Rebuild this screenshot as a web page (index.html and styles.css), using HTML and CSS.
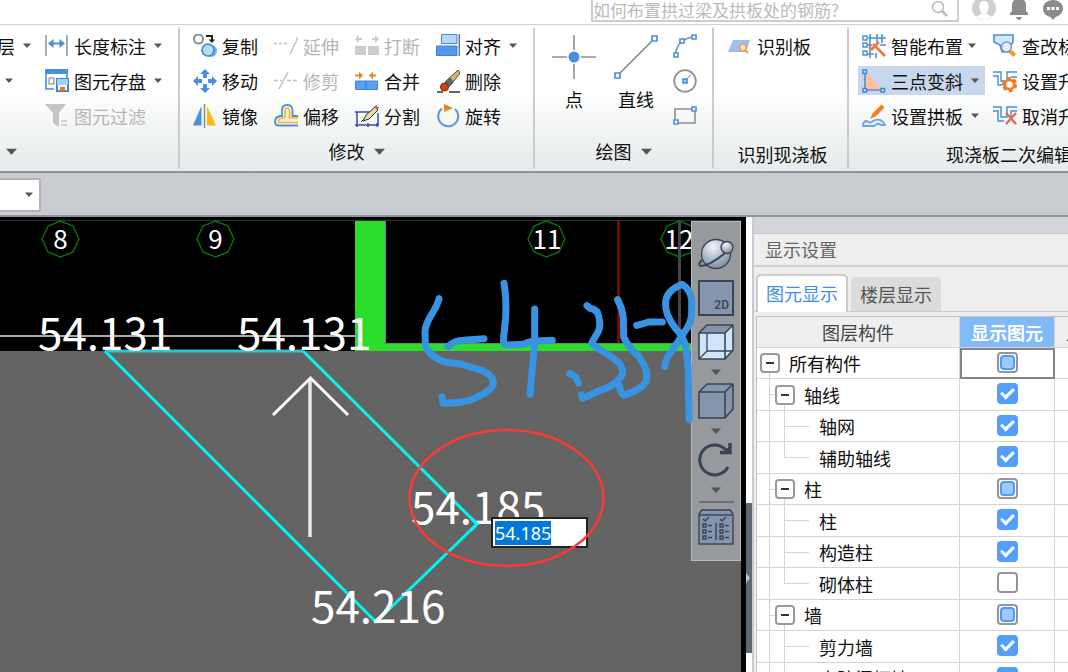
FILE: index.html
```html
<!DOCTYPE html>
<html lang="zh-CN">
<head>
<meta charset="utf-8">
<title>现浇板编辑</title>
<link rel="stylesheet" href="styles.css">
</head>
<body>
<svg class="defs" width="0" height="0" aria-hidden="true">
  <symbol id="caret" viewBox="0 0 10 6"><path d="M0 0.5H10L5 6Z" fill="#555"/></symbol>
  <symbol id="cube" viewBox="0 0 36 36"><path d="M1 9H27V35H1ZM1 9L9 1H35L27 9M35 1V26L27 35" stroke="#3b4452" stroke-width="1.6" stroke-linejoin="round"/></symbol>
</svg>

<header class="topbar">
  <form class="search" role="search">
    <input class="search-input" type="search" aria-label="搜索" placeholder="如何布置拱过梁及拱板处的钢筋?">
    <button class="search-button" type="button" aria-label="搜索"><svg width="17" height="17" viewBox="0 0 17 17" fill="none" stroke="#bbb"><circle cx="7" cy="7" r="5.5" stroke-width="1.5"/><path d="M11 11L16 16" stroke-width="2.5"/></svg></button>
  </form>
  <button class="top-icon" aria-label="用户"><svg width="24" height="24" viewBox="0 0 24 24"><circle cx="12" cy="12" r="12" fill="#d0d0d0"/><path d="M12 5C8 5 7 8 7.500 12C8 15 9 16 9.500 17C9 19 6 19 4 21Q12 27 20 21C18 19 15 19 14.500 17C15 16 16 15 16.500 12C17 8 16 5 12 5Z" fill="#fff"/></svg></button>
  <button class="top-icon" aria-label="通知"><svg width="20" height="24" viewBox="0 0 20 24" fill="#8b8b8b"><path d="M1 19V17L3 15V9Q3 3 10 2Q17 3 17 9V15L19 17V19ZM7 21H13Q12 24 10 24T7 21"/></svg></button>
  <button class="top-icon" aria-label="消息"><svg width="22" height="24" viewBox="0 0 22 24"><path d="M11 4C17 4 21 8 21 12.500C21 17 17 20 13.500 21L11 24L8.500 21C4 20 1 17 1 12.500C1 8 5 4 11 4Z" fill="#8b8b8b"/><path d="M5 11h3v3H5ZM9.500 11h3v3h-3ZM14 11h3v3h-3Z" fill="#fff"/></svg></button>
</header>

<nav class="ribbon" aria-label="工具">
  <section class="group group-common">
    <div class="tools">
      <button class="tool tool-cut">层<svg class="caret"><use href="#caret"/></svg></button>
      <button class="tool"><svg class="icon" viewBox="0 0 24 24" fill="none"><path d="M1 1V22M22 1V22" stroke="#8a929c" stroke-width="1.5"/><path d="M6 9.500H17" stroke="#4a8fde" stroke-width="2"/><path d="M3 9.500L8.500 5V14ZM20 9.500L14.500 5V14Z" fill="#4a8fde"/></svg>长度标注<svg class="caret"><use href="#caret"/></svg></button>
      <button class="tool tool-lone" aria-label="更多"><svg class="caret"><use href="#caret"/></svg></button>
      <button class="tool"><svg class="icon" viewBox="0 0 24 24" fill="none"><path d="M1 1H22V10M1 1V20H9" stroke="#4a8fde" stroke-width="1.6"/><path d="M0 0H23V5H0Z" fill="#4a8fde"/><path d="M4 9H9V15H4Z" stroke="#777"/><path d="M12 10H23V22H12Z" fill="#fff" stroke="#3a86dc" stroke-width="2"/><path d="M12 10H23V16H12Z" fill="#a9cdf7"/><path d="M15 18H20V22H15Z" fill="#f07020"/></svg>图元存盘<svg class="caret"><use href="#caret"/></svg></button>
      <span></span>
      <button class="tool" disabled><svg class="icon" viewBox="0 0 24 24"><path d="M0 0H21L14 9V23L8 19V9Z" fill="#c5c5c5"/><path d="M16 17H22M16 21H22" stroke="#c5c5c5" stroke-width="1.5"/></svg>图元过滤</button>
    </div>
    <button class="caption caption-left" aria-label="展开"><svg class="caret big"><use href="#caret"/></svg></button>
  </section>

  <section class="group group-modify">
    <div class="tools">
      <button class="tool"><svg class="icon" viewBox="0 0 24 24" fill="none"><circle cx="5.500" cy="5" r="4.500" stroke="#8b8f94" stroke-width="2"/><path d="M13 2H19V7" stroke="#222" stroke-width="2"/><path d="M15.500 5.500H22L19 9Z" fill="#222"/><circle cx="18" cy="17" r="6" fill="#6fb0ef"/><circle cx="15" cy="16" r="6" fill="#b5defa" stroke="#3b87d6" stroke-width="1.6"/></svg>复制</button>
      <button class="tool" disabled><svg class="icon" viewBox="0 0 24 24" fill="none" stroke="#c0c0c0" stroke-width="1.5"><path d="M0 9.500H15" stroke-dasharray="3 2"/><path d="M24 3L16 20"/></svg>延伸</button>
      <button class="tool" disabled><svg class="icon" viewBox="0 0 24 24" fill="#ccc"><path d="M0 12H11V21H0ZM13 12H24V21H13ZM0 5L4 1V9ZM24 5L20 1V9Z"/><path d="M3 5H7M17 5H21" stroke="#ccc" stroke-width="2"/></svg>打断</button>
      <button class="tool"><svg class="icon" viewBox="0 0 24 24"><path d="M5.500 0.500H21V9.500H5.500Z" fill="#b8d8fa" stroke="#3f8be0"/><path d="M0.500 12H21V21.500H0.500Z" fill="#5299ec" stroke="#3f82d4"/><path d="M23.300 0V22" stroke="#6b7280" stroke-width="1.4"/></svg>对齐<svg class="caret"><use href="#caret"/></svg></button>
      <button class="tool"><svg class="icon" viewBox="0 0 24 24"><path d="M12 0L17 5H14V9H10V5H7ZM12 24L7 19H10V15H14V19H17ZM0 12L5 7V10H9V14H5V17ZM24 12L19 17V14H15V10H19V7Z" fill="#4a8fde"/></svg>移动</button>
      <button class="tool" disabled><svg class="icon" viewBox="0 0 24 24" fill="none" stroke="#c0c0c0" stroke-width="1.5"><path d="M0 11.500H8M13 11.500H24" stroke-dasharray="4 2"/><path d="M14 3L5 20"/></svg>修剪</button>
      <button class="tool"><svg class="icon" viewBox="0 0 24 24"><path d="M0.500 12H11V20.500H0.500ZM11 12H22.500V20.500H11Z" fill="#5c9ff0" stroke="#3f86dc"/><path d="M8 6.500L4 2.500V10.500ZM14 6.500L18 2.500V10.500Z" fill="#ee8a1d"/><path d="M0 6.500H5M17 6.500H21" stroke="#ee8a1d" stroke-width="2"/></svg>合并</button>
      <button class="tool"><svg class="icon" viewBox="0 0 24 24"><path d="M1 23H7M13 23H24" stroke="#333" stroke-width="1.6"/><path d="M22 1L24 4L14 17L9 13Z" fill="#d9b57c" stroke="#57442a"/><path d="M14 8L18 13L13 18L8 14Z" fill="#666"/><circle cx="8.500" cy="18" r="4" fill="#cf4710" stroke="#6b260b"/></svg>删除</button>
      <button class="tool"><svg class="icon" viewBox="0 0 24 24"><path d="M0 21.500L8.500 2V21.500Z" fill="#4a8fde"/><path d="M11.500 0V24" stroke="#8a9098" stroke-width="1.6"/><path d="M23 21.500L14 2V21.500Z" fill="#fbb714"/></svg>镜像</button>
      <button class="tool"><svg class="icon" viewBox="0 0 24 24" fill="none"><path d="M24 21.500H4Q1 21 1 18Q1 13 6 12H8V6Q8 1 13 1T18.500 6V12H24" stroke="#4a8fde" stroke-width="1.8"/><path d="M24 18.500H4.500Q4 14 9 14L11 13V6Q11 4 13 4T15.500 6V14H24" fill="#fff1d0" stroke="#f5b23a" stroke-width="1.7"/></svg>偏移</button>
      <button class="tool"><svg class="icon" viewBox="0 0 24 24" fill="none"><path d="M2 8H15M2 8V21H23V9M0 21H24M0 8H4M2 19V23M22 19V23M13 19V23" stroke="#3b4fa0" stroke-width="1.5"/><path d="M6 18L13 11" stroke="#222"/><path d="M20 3L23 6L14 15L8 17L11 11Z" fill="#e8dca0" stroke="#333"/><path d="M19 3L21 1L24 4L22 6Z" fill="#d3605d"/></svg>分割</button>
      <button class="tool"><svg class="icon" viewBox="0 0 24 24" fill="none"><path d="M6 4.500A10 10 0 1 0 19 5" stroke="#5b9ae2" stroke-width="2"/><path d="M8 0L17 4L8 8Z" fill="#ee8320"/></svg>旋转</button>
    </div>
    <button class="caption">修改<svg class="caret big"><use href="#caret"/></svg></button>
  </section>

  <section class="group group-draw">
    <div class="draw-tools">
      <button class="tool-big"><svg width="44" height="44" viewBox="0 0 44 44"><path d="M22 0V44M0 22H44" stroke="#8a929a" stroke-width="1.6"/><circle cx="22" cy="22" r="7" fill="#fff"/><circle cx="22" cy="22" r="5.500" fill="#4a8fde"/></svg>点</button>
      <button class="tool-big"><svg width="44" height="44" viewBox="0 0 44 44" fill="#fff"><path d="M3 41L41 3" stroke="#7c8288" stroke-width="1.5"/><path d="M1 38H6V43H1ZM38 1H43V6H38Z" stroke="#4a8fde" stroke-width="1.7"/></svg>直线</button>
      <div class="draw-side">
        <button class="icon-button" aria-label="弧线"><svg class="icon" viewBox="0 0 24 24" fill="#fff"><path d="M2 22Q4 4 22 3" fill="none" stroke="#8a929a" stroke-width="1.6"/><path d="M1 19h4v4H1ZM7 5h4v4H7ZM19 1h4v4h-4Z" stroke="#4a8fde" stroke-width="1.6"/></svg></button>
        <button class="icon-button" aria-label="圆"><svg class="icon" viewBox="0 0 24 24" fill="none"><circle cx="12" cy="12" r="10.800" stroke="#8a929a" stroke-width="1.8"/><path d="M12 12L18 5.500" stroke="#4a8fde"/><path d="M10 10h4v4h-4Z" fill="#a9cff7" stroke="#3f86dc" stroke-width="1.5"/></svg></button>
        <button class="icon-button" aria-label="矩形"><svg class="icon" viewBox="0 0 24 24" fill="none"><path d="M2 5H22V19H2Z" stroke="#8a929a" stroke-width="1.6"/><path d="M1 16h4v4H1ZM19 3h4v4h-4Z" fill="#fff" stroke="#4a8fde" stroke-width="1.6"/></svg></button>
      </div>
    </div>
    <button class="caption">绘图<svg class="caret big"><use href="#caret"/></svg></button>
  </section>

  <section class="group group-detect">
    <div class="tools">
      <button class="tool"><svg class="icon" viewBox="0 0 24 24" fill="none"><path d="M5 6H22L18 18H0Z" fill="#9cc0ea"/><circle cx="15" cy="13.500" r="3.500" fill="#ffe0c4" stroke="#f09a55" stroke-width="1.6"/><path d="M17 16L20 19" stroke="#f09a55" stroke-width="2"/></svg>识别板</button>
    </div>
    <div class="caption caption-low">识别现浇板</div>
  </section>

  <section class="group group-edit">
    <div class="tools">
      <button class="tool tool-near"><svg class="icon" viewBox="0 0 24 24" fill="none"><path d="M6 4H24M4 11H10M18 11H24M4 20H12M8 0V24M15 0V9M20 0V9M14 19V24" stroke="#4a8fde" stroke-width="1.6"/><path d="M1 2h4v4H1ZM1 9h4v4H1ZM1 17h4v4H1Z" fill="#fff" stroke="#4a8fde" stroke-width="1.4"/><path d="M11 10L23 22M9 13L7 15M17 8L12 13L9 16" stroke="#e87a42" stroke-width="2.800"/></svg>智能布置<svg class="caret"><use href="#caret"/></svg></button>
      <button class="tool"><svg class="icon" viewBox="0 0 24 24" fill="none"><path d="M1 1H20V8L17 12V18H9L7 11L1 8Z" fill="#d5e7fa" stroke="#4a8fde" stroke-width="1.6"/><circle cx="13.500" cy="13" r="5" fill="#e4efff" stroke="#8292d8" stroke-width="1.5"/><path d="M19 16L23 20L20 23L16 19Z" fill="#f5a010"/></svg>查改标高</button>
      <button class="tool active"><svg class="icon" viewBox="0 0 24 24"><path d="M3 3L21 21H3Z" fill="#ffc09a"/><path d="M3 3V21H21" fill="none" stroke="#4a8fde" stroke-width="1.6"/><path d="M1 1h3.500v3.500H1ZM1 19.500h3.500V23H1ZM19 19.500h3.500V23H19Z" fill="#d7e8fc" stroke="#3c82d8" stroke-width="1.4"/></svg>三点变斜<svg class="caret"><use href="#caret"/></svg></button>
      <button class="tool"><svg class="icon" viewBox="0 0 24 24" fill="none"><path d="M0 3H8V12H14V3H24M0 7H5V16H11M18 8H24" stroke="#4a8fde" stroke-width="1.4"/><circle cx="16.500" cy="15.500" r="6.500" stroke="#ee7b28" stroke-width="2.500" stroke-dasharray="3.800 3"/><circle cx="16.500" cy="15.500" r="4.700" fill="#fff" stroke="#ee7b28" stroke-width="2.800"/></svg>设置升降</button>
      <button class="tool"><svg class="icon" viewBox="0 0 24 24" fill="none"><path d="M21 2L12 11" stroke="#f2811d" stroke-width="4.500"/><path d="M11 9L14 12L8 15Z" fill="#f2811d"/><path d="M1 22Q1 17 5 17Q8 20 11 17Q19 13 23 21H19Q16 18 12 22Z" fill="#e5f1fd" stroke="#6ba3e3" stroke-width="1.8"/></svg>设置拱板<svg class="caret"><use href="#caret"/></svg></button>
      <button class="tool"><svg class="icon" viewBox="0 0 24 24" fill="none"><path d="M0 3H8V13H14V3H24M0 7H5V17H11M18 13V7H24" stroke="#4a8fde" stroke-width="1.5"/><path d="M13 9L23 20M23 9L13 20" stroke="#dc6b58" stroke-width="2.500"/></svg>取消升降</button>
    </div>
    <div class="caption caption-low">现浇板二次编辑</div>
  </section>
</nav>

<div class="options">
  <span class="combo"><select aria-label="选项"><option></option></select><svg class="caret"><use href="#caret"/></svg></span>
</div>

<main class="workspace">
  <section class="viewport" aria-label="绘图区">
    <svg class="drawing" width="100%" height="100%">
      <g transform="translate(0 -216)">
        <rect y="216" width="4000" height="134" fill="#000"/>
        <path d="M0 219.500H4000" stroke="#333"/>
        <path d="M0 335H356" stroke="#aaa" stroke-width="2"/>
        <path d="M679.500 220V343" stroke="#444" stroke-width="3"/>
        <path d="M618.500 220V343" stroke="#a80808" stroke-width="2"/>
        <path d="M355 220H385V343H4000V350H355Z" fill="#2cde2c"/>
        <path d="M385.500 220V342.500H4000" fill="none" stroke="#5f8f72"/>
        <g fill="none" stroke="#0b6d0b" stroke-width="1.500">
          <path id="axis" d="M60.500 220L73 225L79 238L73 251L60.500 256L48 251L42 238L48 225Z"/>
          <use href="#axis" x="155"/><use href="#axis" x="486"/><use href="#axis" x="619"/>
        </g>
        <g class="axis-text">
          <text x="60.500" y="248">8</text><text x="215.500" y="248">9</text><text x="547" y="248">11</text><text x="679" y="248">12</text>
        </g>
        <path d="M303 350L477 523L376 621L105 350" fill="none" stroke="#00f5f5" stroke-width="3"/>
        <path d="M105 350H303" stroke="#25cbd2" stroke-width="3"/>
        <path d="M310 377V536" stroke="#e8e8e8" stroke-width="3.500"/>
        <path d="M273 414L310.500 377L348 414" fill="none" stroke="#fff" stroke-width="3"/>
        <g class="level-text">
          <text x="38" y="349">54.131</text><text x="237" y="349">54.131</text><text x="411" y="523">54.185</text><text x="311" y="622">54.216</text>
        </g>
        <path d="M470 516L477 523L470 530" fill="none" stroke="#00f5f5" stroke-width="3"/>
      </g>
    </svg>

    <div class="view-tools" role="toolbar" aria-label="视图">
      <button aria-label="动态观察"><svg width="36" height="36" viewBox="0 0 36 36"><defs><radialGradient id="ball" cx=".4" cy=".25" r=".7"><stop offset="0" stop-color="#f2f5f9"/><stop offset="1" stop-color="#8395ad"/></radialGradient></defs><circle cx="18" cy="18" r="14.500" fill="url(#ball)" stroke="#3b4452" stroke-width="1.300"/><path d="M4 24Q-1 29 3 30Q13 29 27 17" fill="none" stroke="#3b4452" stroke-width="2"/><circle cx="29" cy="11.500" r="6" fill="url(#ball)" stroke="#3b4452" stroke-width="1.300"/></svg></button>
      <button class="two-d">2D</button>
      <button class="with-menu" aria-label="线框"><svg width="36" height="36" viewBox="0 0 36 36"><path d="M1 9L9 1H35V26L27 35H1Z" fill="#cfe5fb"/><path d="M1 9L9 1H35L27 9Z" fill="#8495ac"/><path d="M9 9V27H27M1 35L9 27M27 27H35" fill="none" stroke="#3b4452" stroke-width="1.300"/><use href="#cube" fill="none"/></svg><svg class="caret"><use href="#caret"/></svg></button>
      <button class="with-menu" aria-label="实体"><svg width="36" height="36" viewBox="0 0 36 36"><path d="M9 1H35V26L27 35V9Z" fill="#8495ac"/><use href="#cube" fill="#8495ac"/></svg><svg class="caret"><use href="#caret"/></svg></button>
      <button class="with-menu" aria-label="旋转视图"><svg width="36" height="36" viewBox="0 0 36 36" fill="none" stroke="#3b4452"><path d="M30 25A15 15 0 1 1 28 8" stroke-width="3"/><path d="M22 10.500H32V1" stroke-width="3.500"/><path d="M26 10L32 4V10Z" fill="#3b4452"/></svg><svg class="caret"><use href="#caret"/></svg></button>
      <hr>
      <button aria-label="显示设置"><svg width="36" height="36" viewBox="0 0 36 36" fill="none" stroke="#3b4452" stroke-width="1.400"><path d="M1 5L4 1H32L35 5V35H1Z" fill="#8495ac"/><path d="M1 6H35M18 14V31M5 10L7 12L11 8M22 10L24 12L28 8"/><path d="M5 15h3v3H5ZM5 21h3v3H5ZM5 27h3v3H5ZM22 15h3v3h-3ZM22 21h3v3h-3ZM22 27h3v3h-3ZM10 16.500h4M10 22.500h4M10 28.500h4M27 16.500h4M27 22.500h4M27 28.500h4"/></svg></button>
    </div>

    <input class="level-input" id="level" type="text" aria-label="标高" value="54.185">

    <svg class="markup" width="100%" height="100%" aria-hidden="true">
      <g transform="translate(0 -216)" fill="none">
        <ellipse cx="506.500" cy="497" rx="97" ry="68" stroke="#fd3a36" stroke-width="2.500"/>
        <g transform="translate(380 210) scale(.33333)" stroke="#3893e3" stroke-width="21" stroke-linecap="round" stroke-linejoin="round">
          <path d="M177 263Q173 281 155 310T135 360L136 402Q145 435 195 453L245 460L310 480Q348 500 338 525Q330 542 270 568Q230 578 189 577L186 557"/>
          <path d="M204 407Q225 388 250 388L312 383"/>
          <path d="M372 217Q380 260 377 320L370 388Q371 403 382 402L430 400Q450 390 470 390L517 388"/>
          <path d="M464 294V395L450 550"/>
          <path d="M569 488Q592 496 595 516"/>
          <path d="M621 284L630 292Q654 295 657 320Q665 350 650 370L635 396Q655 415 695 438Q731 462 728 485Q718 520 660 538L608 562L604 551"/>
          <path d="M713 266Q730 300 730 325L731 378Q745 410 775 434Q805 475 800 505Q794 533 732 553Q720 545 718 524"/>
          <path d="M770 343Q790 338 806 333H847"/>
          <path d="M854 467Q856 445 875 420L912 365Q935 335 935 305V265Q930 235 907 220Q855 240 857 280Q855 310 885 350Q915 380 917 410Q925 450 925 500L927 625"/>
        </g>
      </g>
    </svg>
  </section>

  <div class="splitter"><button aria-label="收起面板"><svg width="4" height="10" viewBox="0 0 4 10"><path d="M0 0L4 5L0 10Z" fill="#c5c9ce"/></svg></button></div>

  <aside class="panel">
    <div class="panel-top"></div>
    <h2 class="panel-title">显示设置</h2>
    <div class="tabs" role="tablist">
      <button class="tab selected" role="tab" aria-selected="true">图元显示</button>
      <button class="tab" role="tab" aria-selected="false">楼层显示</button>
    </div>
    <table class="layers">
      <colgroup><col class="col-name"><col class="col-show"><col class="col-show"></colgroup>
      <thead><tr><th scope="col">图层构件</th><th scope="col" class="current">显示图元</th><th scope="col">显示名称</th></tr></thead>
      <tbody>
        <tr><td><div class="node root"><button class="toggle" aria-label="折叠所有构件"></button><label for="c0">所有构件</label></div></td><td class="focus"><input type="checkbox" id="c0" data-partial></td><td></td></tr>
        <tr><td><div class="node branch"><button class="toggle" aria-label="折叠轴线"></button><label for="c1">轴线</label></div></td><td><input type="checkbox" id="c1" checked></td><td></td></tr>
        <tr><td><div class="node leaf"><label for="c2">轴网</label></div></td><td><input type="checkbox" id="c2" checked></td><td></td></tr>
        <tr><td><div class="node leaf last"><label for="c3">辅助轴线</label></div></td><td><input type="checkbox" id="c3" checked></td><td></td></tr>
        <tr><td><div class="node branch"><button class="toggle" aria-label="折叠柱"></button><label for="c4">柱</label></div></td><td><input type="checkbox" id="c4" data-partial></td><td></td></tr>
        <tr><td><div class="node leaf"><label for="c5">柱</label></div></td><td><input type="checkbox" id="c5" checked></td><td></td></tr>
        <tr><td><div class="node leaf"><label for="c6">构造柱</label></div></td><td><input type="checkbox" id="c6" checked></td><td></td></tr>
        <tr><td><div class="node leaf last"><label for="c7">砌体柱</label></div></td><td><input type="checkbox" id="c7"></td><td></td></tr>
        <tr><td><div class="node branch"><button class="toggle" aria-label="折叠墙"></button><label for="c8">墙</label></div></td><td><input type="checkbox" id="c8" data-partial></td><td></td></tr>
        <tr><td><div class="node leaf"><label for="c9">剪力墙</label></div></td><td><input type="checkbox" id="c9" checked></td><td></td></tr>
        <tr><td><div class="node leaf"><label for="c10">人防门框墙</label></div></td><td><input type="checkbox" id="c10" checked></td><td></td></tr>
      </tbody>
    </table>
  </aside>
</main>
<script src="app.js"></script>
</body>
</html>
```

FILE: styles.css
```css
*, *::before, *::after { box-sizing: border-box; }

body {
  margin: 0;
  height: 100vh;
  display: flex;
  flex-direction: column;
  overflow: hidden;
  background: #fff;
  color: #111;
  font: 18px/24px "Noto Sans CJK SC", sans-serif;
}

button {
  margin: 0;
  padding: 0;
  border: 0;
  background: none;
  color: inherit;
  font: inherit;
  white-space: nowrap;
}

svg { flex: none; display: block; }
.defs { position: absolute; }
.caret { width: 8px; height: 5px; }
.caret.big { width: 11px; height: 7px; }
.icon { width: 24px; height: 24px; }

/* Top bar */
.topbar {
  flex: none;
  height: 24px;
  display: flex;
  justify-content: flex-end;
  align-items: flex-start;
  gap: 13px;
  padding-right: 4px;
  overflow: hidden;
}
.search {
  width: 368px;
  height: 22px;
  display: flex;
  align-items: center;
  padding-right: 9px;
  border: 2px solid #ccc;
  border-top: 0;
}
.search-input {
  flex: 1;
  min-width: 0;
  height: 20px;
  padding: 0;
  border: 0;
  outline: 0;
  background: none;
  font: 17px/20px "Noto Sans CJK SC", sans-serif;
}
.search-input::placeholder { color: #bbb; }
.search-button { margin-top: -4px; }
.top-icon { margin-top: -4px; }

/* Ribbon */
.ribbon {
  flex: none;
  display: flex;
  overflow: hidden;
  border-top: 1px solid #d0d0d0;
  border-bottom: 2px solid #909499;
  background: linear-gradient(#fff 45%, #e5eaea);
}
.group {
  flex: none;
  display: flex;
  flex-direction: column;
  padding: 3px 0 2px;
  border-right: 2px solid;
  border-image: linear-gradient(transparent 2%, #ccc 3%, #ccc 97%, transparent 98%) 1;
}
.group-common { width: 180px; }
.group-modify { width: 355px; }
.group-draw { width: 179px; }
.group-detect { width: 135px; }
.group-edit { width: 322px; }

.tools { display: grid; grid-auto-rows: 35px; align-items: center; }
.group-common .tools { grid-template-columns: 45px 1fr; }
.group-modify .tools { grid-template-columns: repeat(4, 81px); padding-left: 13px; }
.group-detect .tools { padding-left: 14px; height: 105px; }
.group-edit .tools { grid-template-columns: 131px 1fr; padding-left: 9px; }

.tool {
  display: flex;
  align-items: center;
  gap: 5px;
  height: 29px;
}
.tool .caret { margin-left: 3px; }
.tool:disabled { color: #b5b5b5; }
.tool-cut { margin-left: -3px; }
.tool-lone { padding-left: 2px; }
.group-edit .tool { justify-self: start; padding: 0 6px 0 4px; }
.group-edit .tool-near .caret { margin-left: 0; }
.group-edit .active { background: #c7d7ee; }

.caption {
  height: 36px;
  display: flex;
  align-items: center;
  justify-content: center;
  gap: 9px;
}
.caption-left { justify-content: flex-start; padding-left: 6px; }
.caption-low { padding-top: 5px; }
.group-detect .caption-low { padding-left: 4px; }

.draw-tools {
  height: 105px;
  display: grid;
  grid-template-columns: 62px 62px 1fr;
  padding-left: 8px;
}
.tool-big {
  display: flex;
  flex-direction: column;
  align-items: center;
  gap: 8px;
  padding-top: 7px;
}
.draw-side { display: grid; grid-auto-rows: 35px; align-items: center; padding-left: 6px; }
.icon-button { justify-self: start; }

/* Options bar */
.options {
  flex: none;
  height: 44px;
  padding-top: 5px;
  background: #c9ccd1;
  border-bottom: 2px solid #8f959d;
}
.combo { position: relative; display: block; width: 41px; }
.combo select {
  display: block;
  width: 100%;
  height: 34px;
  appearance: none;
  border: 2px solid #b3b3b3;
  border-left: 0;
  border-radius: 0;
  background: #fff;
}
.combo .caret { position: absolute; right: 8px; top: 14px; pointer-events: none; }

/* Workspace */
.workspace { flex: 1; min-height: 0; display: flex; }
.viewport {
  position: relative;
  flex: 1;
  min-width: 0;
  overflow: hidden;
  background: #646464;
  border-right: 5px solid #000;
}
.drawing, .markup { position: absolute; inset: 0; }
.markup { pointer-events: none; }
.axis-text { fill: #fff; font-size: 26px; text-anchor: middle; }
.level-text { fill: #fff; font-size: 44px; }

.view-tools {
  position: absolute;
  top: 4px;
  right: 0;
  width: 50px;
  height: 340px;
  display: flex;
  flex-direction: column;
  align-items: center;
  gap: 8px;
  padding-top: 14px;
  background: #96999e;
  border: 1px solid #b5b7ba;
}
.view-tools button { flex: none; display: flex; flex-direction: column; align-items: center; }
.view-tools .with-menu { gap: 9px; }
.view-tools .caret { width: 10px; height: 6px; }
.view-tools hr { width: 35px; height: 2px; margin: 0 0 -2px; border: 0; background: #6d6f73; }
.view-tools .two-d {
  width: 36px;
  height: 36px;
  align-items: flex-end;
  justify-content: flex-end;
  padding: 0 3px 2px;
  border: 2px solid #3b4452;
  background: #8495ac;
  color: #3b4452;
  font: 500 12px/14px Roboto, sans-serif;
}

.level-input {
  position: absolute;
  left: 491px;
  top: 300px;
  width: 97px;
  height: 31px;
  padding: 0 2px;
  border: 2px solid #222;
  border-radius: 0;
  outline: 0;
  background: #fff;
  color: #111;
  font: 18px "Noto Sans", sans-serif;
}
.level-input::selection { background: #0078d7; color: #fff; }

.splitter { flex: none; width: 6px; background: #fff; padding-top: 286px; }
.splitter button { width: 6px; height: 150px; background: #606973; }

/* Panel */
.panel {
  flex: none;
  width: 316px;
  overflow: hidden;
  background: #eee;
  border-left: 2px solid #c8cacf;
}
.panel-top { height: 17px; background: #d3d4da; border-bottom: 1px solid #c5c5c9; }
.panel-title {
  height: 33px;
  margin: 0;
  padding-left: 11px;
  border-bottom: 2px solid #cdcfd2;
  color: #666;
  font: 18px/30px "Noto Sans CJK SC", sans-serif;
}
.tabs {
  height: 45px;
  display: flex;
  align-items: flex-end;
  gap: 3px;
  padding-left: 2px;
  border-bottom: 1px solid #ccc;
}
.tab {
  height: 34px;
  padding: 0 9px;
  border-radius: 5px 5px 0 0;
  background: #dcdcdc;
  color: #555;
}
.tab.selected {
  height: 38px;
  margin-bottom: -1px;
  padding: 0 8px 2px;
  border: 2px solid #ccc;
  border-bottom: 0;
  background: #fff;
  color: #3f8ef0;
}
.layers {
  width: 393px;
  margin: 4px 0 0 2px;
  table-layout: fixed;
  border-collapse: separate;
  border-spacing: 0;
  border-top: 1px solid #c2c2c2;
  border-left: 1px solid #c2c2c2;
  background: #fff;
}
.col-name { width: 203px; }
.col-show { width: 95px; }
.layers th, .layers td { padding: 0; border: 0 solid #d4d4d4; border-width: 0 1px 1px 0; }
.layers th { height: 31px; background: #efefef; color: #444; font-weight: 400; }
.layers th.current { background: #80baf9; color: #fff; font-weight: 700; }
.layers td { height: 31px; text-align: center; vertical-align: top; }
.layers tbody tr:nth-child(even) td { height: 32px; }
.layers td.focus { border: 2px solid #858585; }

.node {
  height: 30px;
  display: flex;
  align-items: center;
  gap: 9px;
  padding-left: 3px;
  background: linear-gradient(#d4d4d4, #d4d4d4) 12px 100% / 1px 5px no-repeat;
}
.layers tr:nth-child(even) .node { height: 31px; }
.node.branch {
  padding-left: 18px;
  background:
    linear-gradient(#d4d4d4, #d4d4d4) 12px 0 / 1px 100% no-repeat,
    linear-gradient(#d4d4d4, #d4d4d4) 12px 15px / 6px 1px no-repeat,
    linear-gradient(#d4d4d4, #d4d4d4) 27px 100% / 1px 5px no-repeat;
}
.node.leaf {
  padding-left: 62px;
  background:
    linear-gradient(#d4d4d4, #d4d4d4) 12px 0 / 1px 100% no-repeat,
    linear-gradient(#d4d4d4, #d4d4d4) 27px 0 / 1px 100% no-repeat,
    linear-gradient(#d4d4d4, #d4d4d4) 27px 15px / 25px 1px no-repeat;
}
.node.leaf.last {
  background:
    linear-gradient(#d4d4d4, #d4d4d4) 12px 0 / 1px 100% no-repeat,
    linear-gradient(#d4d4d4, #d4d4d4) 27px 0 / 1px 16px no-repeat,
    linear-gradient(#d4d4d4, #d4d4d4) 27px 15px / 25px 1px no-repeat;
}
.toggle {
  flex: none;
  width: 20px;
  height: 20px;
  border: 2px solid #999;
  border-radius: 4px;
  background: linear-gradient(#333, #333) center / 8px 2px no-repeat #fff;
}

.layers input {
  appearance: none;
  display: grid;
  place-items: center;
  width: 21px;
  height: 21px;
  margin: 4px auto 0;
  border: 2px solid #969696;
  border-radius: 4px;
  background: #fff;
}
.layers .focus input { margin-top: 2px; }
.layers input:checked { border-color: #539ffb; background: #539ffb; }
.layers input:checked::after {
  content: "";
  width: 13px;
  height: 8px;
  margin-bottom: 4px;
  border: solid #fff;
  border-width: 0 0 3px 3px;
  transform: rotate(-45deg);
}
.layers input:indeterminate::after {
  content: "";
  width: 15px;
  height: 15px;
  border: 2px solid #4b9bf8;
  border-radius: 4px;
  background: #a0caff;
}
```

FILE: app.js
```js
document.querySelectorAll("[data-partial]").forEach((box) => {
  box.indeterminate = true;
});

const level = document.getElementById("level");
level.focus();
level.select();
```
